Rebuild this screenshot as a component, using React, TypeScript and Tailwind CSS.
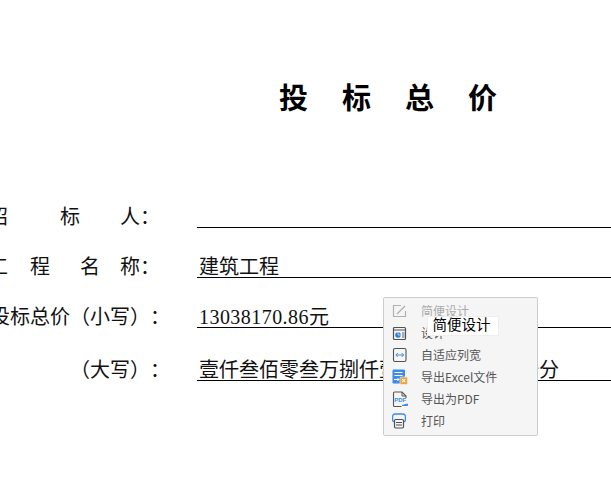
const font = { fontFamily: '"Noto Sans CJK SC", sans-serif' };

function Icon({ children }: { children: React.ReactNode }) {
  return (
    <svg width="18" height="18" viewBox="0 0 18 18" fill="none" className="shrink-0">
      {children}
    </svg>
  );
}

const items: [string, React.ReactNode, string][] = [
  [
    "简便设计",
    <Icon>
      <path d="M13.5 8v5.5h-12v-11H9" stroke="#b0b0b0" strokeWidth="1.2" />
      <path d="M5 11L13 3" stroke="#b0b0b0" strokeWidth="1.2" />
    </Icon>,
    "text-[#aaaaaa]",
  ],
  [
    "设计",
    <Icon>
      <rect x="1.5" y="2.5" width="12" height="12" rx="1" stroke="#505050" strokeWidth="1.2" />
      <path d="M2 5h11" stroke="#505050" />
      <circle cx="6" cy="10" r="2.8" fill="#2f7de1" />
      <path d="M6 7v3h3" stroke="#fff" strokeWidth="0.6" />
      <path d="M10 8h2.5M10 10h2.5M10 12h2.5" stroke="#505050" strokeWidth="0.9" />
    </Icon>,
    "text-[#555555]",
  ],
  [
    "自适应列宽",
    <Icon>
      <rect x="1.5" y="1.5" width="12.5" height="13" rx="1.5" stroke="#505050" strokeWidth="1.1" />
      <path d="M4 8h7.5M5.8 6L3.8 8l2 2M9.7 6l2 2-2 2" stroke="#3d8de8" strokeWidth="1" />
    </Icon>,
    "text-[#555555]",
  ],
  [
    "导出Excel文件",
    <Icon>
      <rect x="0.5" y="0.5" width="12.5" height="14" rx="1.2" fill="#3b8bea" />
      <path d="M2.5 3.5h8M2.5 6.5h8" stroke="#fff" strokeWidth="1.2" />
      <path d="M2 10.5h5M5.5 9l1.5 1.5L5.5 12" stroke="#fff" strokeWidth="1" />
      <rect x="8" y="8" width="7.5" height="7.5" rx="1.2" fill="#f2a33a" stroke="#f5f5f5" strokeWidth="0.6" />
      <path d="M10.2 10.2l3 3M13.2 10.2l-3 3" stroke="#fff" strokeWidth="1.1" />
    </Icon>,
    "text-[#555555]",
  ],
  [
    "导出为PDF",
    <Icon>
      <path d="M9.5 15.5H2.5a1 1 0 0 1-1-1V2a1 1 0 0 1 1-1H10l4 4v2" stroke="#555" strokeWidth="1.1" />
      <path d="M10 1v4h4" stroke="#555" strokeWidth="1" />
      <text x="2.2" y="11.4" fontSize="6" fontWeight="700" fill="#3b8bea" fontFamily="Liberation Sans" textLength="12">PDF</text>
      <path d="M10 14.5h5.5V13z" fill="#3b8bea" stroke="#3b8bea" />
    </Icon>,
    "text-[#555555]",
  ],
  [
    "打印",
    <Icon>
      <path d="M3 8.5H1.8A1.2 1.2 0 0 1 .6 7.3V3.5a2.5 2.5 0 0 1 2.5-2.5h7.8a2.5 2.5 0 0 1 2.5 2.5v3.8a1.2 1.2 0 0 1-1.2 1.2H11" stroke="#3b8bea" strokeWidth="1.3" />
      <rect x="2.5" y="6.5" width="9" height="8.5" rx="1.2" fill="#f5f5f5" stroke="#505050" strokeWidth="1.2" />
      <path d="M4 9.5h6M4 12h6" stroke="#505050" strokeWidth="1" />
    </Icon>,
    "text-[#555555]",
  ],
];

function Cell({ c }: { c: string }) {
  return <span className="w-[20px] shrink-0 text-center">{c}</span>;
}

function Row({ label, value, h, mr = "mr-[37px]" }: { label: React.ReactNode; value: React.ReactNode; h: string; mr?: string }) {
  return (
    <div className={`flex items-end ${h}`}>
      <div className="w-[197px] shrink-0 flex justify-end h-[28px] text-[20px] leading-[32px] text-[#111]">
        <div className={`flex ${mr}`}>{label}</div>
      </div>
      <div className="flex-1 min-w-0 border-b border-black pl-[2px] h-[28px] whitespace-nowrap text-[20px] leading-[32px] text-[#111]">
        {value}
      </div>
    </div>
  );
}

export default function App() {
  return (
    <div className="relative w-[611px] h-[497px] overflow-hidden bg-white" style={font}>
      <div className="pt-[75px] pl-[279px] flex gap-[34px] text-[29px] leading-[42px] font-bold text-black">
        <span>投</span>
        <span>标</span>
        <span>总</span>
        <span>价</span>
      </div>
      <div className="mt-[82px]">
        <Row
          h="h-[29px]"
          label={
            <>
              <Cell c="招" />
              <span className="w-[52px]" />
              <Cell c="标" />
              <span className="w-[40px]" />
              <Cell c="人" />
              <Cell c="：" />
            </>
          }
          value=""
        />
        <Row
          h="h-[50px]"
          label={
            <>
              <Cell c="工" />
              <span className="w-[22px]" />
              <Cell c="程" />
              <span className="w-[30px]" />
              <Cell c="名" />
              <span className="w-[20px]" />
              <Cell c="称" />
              <Cell c="：" />
            </>
          }
          value="建筑工程"
        />
        <Row
          h="h-[50px]"
          mr="mr-[27px]"
          label={
            <>
              {"投标总价（小写）：".split("").map((c, i) => (
                <Cell key={i} c={c} />
              ))}
            </>
          }
          value={
            <>
              <span className="tracking-[0.45px]" style={{ fontFamily: '"Liberation Serif", serif' }}>
                13038170.86
              </span>
              元
            </>
          }
        />
        <Row
          h="h-[53px]"
          mr="mr-[27px]"
          label={
            <>
              {"（大写）：".split("").map((c, i) => (
                <Cell key={i} c={c} />
              ))}
            </>
          }
          value="壹仟叁佰零叁万捌仟壹佰柒拾元捌角陆分"
        />
      </div>
      <div className="absolute left-[383px] top-[297px] w-[155px] h-[139px] bg-[#f5f5f5] border border-[#cccccc] rounded-[2px] pt-[3px] pl-[8px]">
        {items.map(([t, ic, c]) => (
          <div key={t} className="flex items-center h-[22px] gap-[11px]">
            {ic}
            <span className={`text-[12px] leading-[20px] pb-[2px] ${c}`}>{t}</span>
          </div>
        ))}
      </div>
      <div className="absolute left-[427px] top-[316px] w-[72px] h-[20px] bg-white border border-[#eeeeee] flex items-center justify-center pb-[4px] pr-[3px] text-[14.5px] leading-[16px] text-black">
        简便设计
      </div>
    </div>
  );
}
